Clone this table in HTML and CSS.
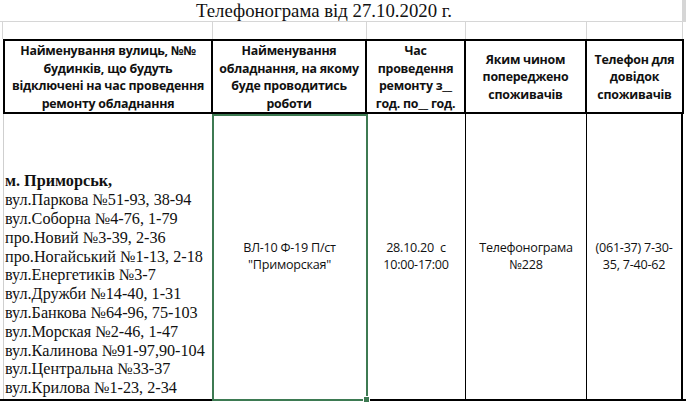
FILE: index.html
```html
<!DOCTYPE html>
<html lang="uk">
<head>
<meta charset="utf-8">
<title>Телефонограма</title>
<link rel="stylesheet" href="styles.css">
</head>
<body>
<div class="sheet">
  <div class="grid title-row">
    <div class="gcell"></div>
    <div class="gcell"></div>
    <div class="gcell"></div>
    <div class="gcell"></div>
    <div class="gcell"></div>
    <div class="title-text">Телефонограма від 27.10.2020 г.</div>
  </div>
  <div class="grid gap-row">
    <div class="gcell"></div>
    <div class="gcell"></div>
    <div class="gcell"></div>
    <div class="gcell"></div>
    <div class="gcell"></div>
  </div>
  <div class="grid head-row">
    <div class="hcell">Найменування вулиць, №№<br>будинків, що будуть<br>відключені на час проведення<br>ремонту обладнання</div>
    <div class="hcell">Найменування<br>обладнання, на якому<br>буде проводитись<br>роботи</div>
    <div class="hcell">Час<br>проведення<br>ремонту з__<br>год. по__ год.</div>
    <div class="hcell">Яким чином<br>попереджено<br>споживачів</div>
    <div class="hcell">Телефон для<br>довідок<br>споживачів</div>
  </div>
  <div class="grid data-row">
    <div class="dcell streets">
      <div class="city">м. Приморськ,</div>
      <div>вул.Паркова №51-93, 38-94</div>
      <div>вул.Соборна №4-76, 1-79</div>
      <div>про.Новий №3-39, 2-36</div>
      <div>про.Ногайський №1-13, 2-18</div>
      <div>вул.Енергетиків №3-7</div>
      <div>вул.Дружби №14-40, 1-31</div>
      <div>вул.Банкова №64-96, 75-103</div>
      <div>вул.Морская №2-46, 1-47</div>
      <div>вул.Калинова №91-97,90-104</div>
      <div>вул.Центральна №33-37</div>
      <div>вул.Крилова №1-23, 2-34</div>
    </div>
    <div class="dcell mid selected">ВЛ-10 Ф-19 П/ст<br>"Приморская"</div>
    <div class="dcell mid">28.10.20&nbsp; с<br>10:00-17:00</div>
    <div class="dcell mid">Телефонограма<br>№228</div>
    <div class="dcell mid last">(061-37) 7-30-<br>35, 7-40-62</div>
  </div>
</div>
</body>
</html>
```

FILE: styles.css
```css
html, body {
  margin: 0;
  padding: 0;
  background: #ffffff;
}

.sheet {
  width: 686px;
  height: 403px;
  overflow: hidden;
  color: #111;
}

.grid {
  display: grid;
  grid-template-columns: 210px 154px 99px 121px 96px;
  margin-left: 3px;
}

.gcell {
  grid-row: 1;
  border-right: 1px solid #d6d6d6;
}
.gcell:first-child {
  border-left: 1px solid #d6d6d6;
  margin-left: -1px;
}

.title-row {
  height: 21px;
  border-bottom: 1px solid #d6d6d6;
  margin-left: 0;
  padding-left: 3px;
}

.title-text {
  grid-row: 1;
  grid-column: 1 / -1;
  justify-self: center;
  margin-right: 38px;
  padding: 0 4px;
  background: #fff;
  font-family: "Liberation Serif", "Times New Roman", serif;
  font-size: 18.8px;
  line-height: 21px;
  white-space: nowrap;
}

.gap-row {
  height: 17px;
}

.head-row {
  height: 75px;
  box-sizing: border-box;
  border-top: 2px solid #000;
  border-bottom: 2px solid #000;
  border-left: 2px solid #000;
  width: 681px;
  grid-template-columns: 208px 154px 99px 121px 97px;
}

.hcell {
  border-right: 2px solid #000;
  display: flex;
  align-items: center;
  justify-content: center;
  text-align: center;
  white-space: nowrap;
  font-family: "Open Sans", "Noto Sans", sans-serif;
  font-weight: 700;
  font-size: 12.4px;
  line-height: 17.5px;
  letter-spacing: -0.25px;
  padding-top: 1px;
}

.data-row {
  height: 287px;
  box-sizing: border-box;
  border-bottom: 2px solid #000;
  margin-left: 0;
  grid-template-columns: 213px 154px 99px 121px 96px;
  width: 686px;
}

.dcell {
  border-right: 1px solid #000;
}

.streets {
  border-left: 1px solid #cfcfcf;
  margin-left: 3px;
  font-family: "Liberation Serif", "Times New Roman", serif;
  font-size: 16.2px;
  line-height: 18.8px;
  display: flex;
  flex-direction: column;
  justify-content: flex-end;
  padding: 0 0 1px 1px;
  white-space: nowrap;
}

.city {
  font-weight: 700;
}

.mid {
  display: flex;
  align-items: center;
  justify-content: center;
  text-align: center;
  white-space: nowrap;
  font-family: "Open Sans", "Noto Sans", sans-serif;
  font-size: 12.6px;
  line-height: 17px;
  letter-spacing: -0.25px;
  padding-bottom: 1px;
}

.last {
  border-right: 2px solid #000;
  width: 96px;
  box-sizing: border-box;
}

.selected {
  position: relative;
}
.selected::after {
  content: "";
  position: absolute;
  left: -1px;
  right: -2px;
  top: 0;
  bottom: -2px;
  border: 2px solid #3d7a52;
}
.selected::before {
  content: "";
  position: absolute;
  right: -4px;
  bottom: -4px;
  width: 5px;
  height: 5px;
  background: #3d7a52;
  border: 1px solid #fff;
  z-index: 1;
}
```
